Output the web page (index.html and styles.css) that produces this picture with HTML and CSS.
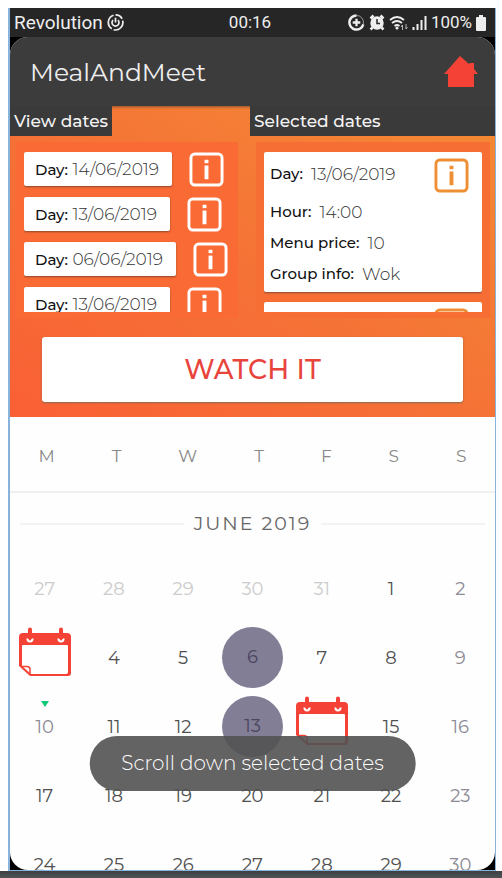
FILE: index.html
```html
<!DOCTYPE html>
<html lang="en">
<head>
<meta charset="utf-8">
<title>MealAndMeet</title>
<link rel="stylesheet" href="styles.css">
</head>
<body>
<svg class="defs" aria-hidden="true">
  <symbol id="info" viewBox="0 0 36 36">
    <rect x="2" y="2" width="32" height="32" rx="4" fill="none" stroke="currentColor" stroke-width="3"/>
    <path d="M18 14v14" fill="none" stroke="currentColor" stroke-width="4"/>
    <rect x="16" y="8" width="4" height="3.5" fill="currentColor"/>
  </symbol>
  <symbol id="event" viewBox="0 0 52 50">
    <path d="M4 6h44q4 0 4 4v36q0 3-3 3H11L0 39V10q0-4 4-4z" fill="#f44336"/>
    <path d="M3 19Q3 18 4 18h44q1 0 1 1v26q0 2-2 2H12L3 39z" fill="#fff"/>
    <path d="M2 39.500h6q3 0 3 3V47" fill="none" stroke="#f44336" stroke-width="1.500"/>
    <path d="M8.500 11.500q0 3 2.500 3t2.500-3M39.500 11.500q0 3 2.500 3t2.500-3" fill="none" stroke="#fff" stroke-width="2.200"/>
    <path d="M11 2.500v8M42 2.500v8" stroke="#f44336" stroke-width="4" stroke-linecap="round"/>
  </symbol>
</svg>
<div class="phone">
  <div class="status">
    <span class="carrier">Revolution
      <svg width="17" height="17" viewBox="0 0 18 18" fill="none" stroke="currentColor" stroke-width="1.8"><path d="M7 1.300A8 8 0 0 0 5 15.600M7 16.700A8 8 0 0 0 16.600 7M16 5A8 8 0 0 0 9 1"/><path d="M6.400 6.400a3.700 3.700 0 1 0 5.200 0M9 4v5"/></svg>
    </span>
    <span class="clock">00:16</span>
    <span class="indicators">
      <svg width="17" height="17" viewBox="0 0 18 18" fill="none" stroke="currentColor"><path d="M9 1.500A7.500 7.500 0 1 0 16.200 11" stroke-width="2.600"/><path d="M9 1.500A7.500 7.500 0 0 1 16.200 11" stroke-width="1" opacity=".6"/><path d="M9 5v8M5 9h8" stroke-width="2.400"/></svg>
      <svg width="16" height="17" viewBox="0 0 16 17"><path d="M4.500 1.500L1.500 4.500M11.500 1.500l3 3M3.500 13.500l-2 2M12.500 13.500l2 2" stroke="currentColor" stroke-width="2.500"/><circle cx="8" cy="9" r="6.700" fill="currentColor"/><path d="M8 5v4.500h3" fill="none" stroke="#262626" stroke-width="1.500"/></svg>
      <svg width="19" height="16" viewBox="0 0 19 16" fill="none" stroke="currentColor" stroke-width="1.700"><path d="M1 5Q8 -1 15 5M3 8q5-4 10 0M5.500 11q2.500-2 5 0"/><circle cx="8" cy="13" r=".7"/><path d="M13.500 15V10l-1.500 2M17 9v5l1.500-2" stroke-width="1" opacity=".7"/></svg>
      <svg width="15" height="15" viewBox="0 0 15 15" stroke="currentColor" stroke-width="2"><path d="M1.500 15v-3M5.500 15V9M9.500 15V5M13.500 15V1"/></svg>
      <span>100%</span>
      <svg width="10" height="16" viewBox="0 0 10 16" fill="currentColor"><path d="M3 0h4v2h2q1 0 1 1v12q0 1-1 1H1q-1 0-1-1V3q0-1 1-1h2z"/></svg>
    </span>
  </div>
  <main class="screen">
    <header class="appbar">
      <h1>MealAndMeet</h1>
      <button class="icon-button" aria-label="Home">
        <svg width="34" height="31" viewBox="0 0 34 31"><path d="M16 0l9 8 1-1h4v6l4 5h-4v13H4V18H0z" fill="#f44336"/></svg>
      </button>
    </header>
    <section class="dates">
      <div class="columns">
        <section class="column">
          <h2>View dates</h2>
          <ul class="list">
            <li><span class="chip"><b>Day:</b> 14/06/2019</span><button class="icon-button" aria-label="Info"><svg class="info"><use href="#info"/></svg></button></li>
            <li><span class="chip"><b>Day:</b> 13/06/2019</span><button class="icon-button" aria-label="Info"><svg class="info"><use href="#info"/></svg></button></li>
            <li><span class="chip"><b>Day:</b> 06/06/2019</span><button class="icon-button" aria-label="Info"><svg class="info"><use href="#info"/></svg></button></li>
            <li><span class="chip"><b>Day:</b> 13/06/2019</span><button class="icon-button" aria-label="Info"><svg class="info"><use href="#info"/></svg></button></li>
          </ul>
        </section>
        <section class="column">
          <h2 class="wide">Selected dates</h2>
          <div class="list cards">
            <article class="card">
              <dl>
                <div class="day"><dt>Day:</dt><dd>13/06/2019</dd></div>
                <div><dt>Hour:</dt><dd>14:00</dd></div>
                <div><dt>Menu price:</dt><dd>10</dd></div>
                <div><dt>Group info:</dt><dd>Wok</dd></div>
              </dl>
              <button class="icon-button" aria-label="Info"><svg class="info"><use href="#info"/></svg></button>
            </article>
            <article class="card next">
              <button class="icon-button" aria-label="Info"><svg class="info"><use href="#info"/></svg></button>
            </article>
          </div>
        </section>
      </div>
      <button class="watch">WATCH IT</button>
    </section>
    <section class="calendar">
      <div class="weekdays"><span>M</span><span>T</span><span>W</span><span>T</span><span>F</span><span>S</span><span>S</span></div>
      <h2 class="month">JUNE 2019</h2>
      <div class="days">
        <button class="out">27</button><button class="out">28</button><button class="out">29</button><button class="out">30</button><button class="out">31</button><button>1</button><button class="sunday">2</button>
        <button aria-label="3"><svg class="event"><use href="#event"/></svg></button><button>4</button><button>5</button><button><span class="picked">6</span></button><button>7</button><button>8</button><button class="sunday">9</button>
        <button class="sunday today">10</button><button>11</button><button>12</button><button><span class="picked">13</span></button><button aria-label="14"><svg class="event"><use href="#event"/></svg></button><button>15</button><button class="sunday">16</button>
        <button>17</button><button>18</button><button>19</button><button>20</button><button>21</button><button>22</button><button class="sunday">23</button>
        <button>24</button><button>25</button><button>26</button><button>27</button><button>28</button><button>29</button><button class="sunday">30</button>
      </div>
    </section>
  </main>
  <div class="toast" role="status">Scroll down selected dates</div>
</div>
<div class="edge"></div>
</body>
</html>
```

FILE: styles.css
```css
* { box-sizing: border-box; }
body {
  margin: 0;
  height: 100vh;
  padding-top: 8px;
  display: flex;
  flex-direction: column;
  background: #fff;
  color: #505050;
  font-family: Montserrat, Inter, sans-serif;
}
h1, h2, ul, dl, dd { margin: 0; padding: 0; font-weight: 400; }
button { font: inherit; color: inherit; border: 0; padding: 0; background: none; }
svg { display: block; }
.defs { position: absolute; width: 0; height: 0; }
.phone {
  position: relative;
  flex: 1;
  min-height: 0;
  margin: 0 6px 0 8px;
  display: flex;
  flex-direction: column;
  border: solid #88b4dc;
  border-width: 0 1px 1px 2px;
  background: #000;
}
.edge { height: 7px; background: linear-gradient(#3c3f43, #505356); }
.status {
  height: 29px;
  flex: none;
  display: grid;
  grid-template-columns: 1fr auto 1fr;
  align-items: center;
  padding: 0 9px 0 4px;
  background: #262626;
  color: #eee;
  font: 17px/29px Roboto, sans-serif;
}
.carrier, .indicators { display: flex; align-items: center; gap: 4px; }
.carrier { font-size: 19px; }
.indicators { justify-content: flex-end; }
.screen {
  flex: 1;
  min-height: 0;
  overflow: hidden;
  border-radius: 18px;
  background: #fefefe;
}
.appbar {
  height: 69px;
  display: flex;
  align-items: center;
  justify-content: space-between;
  padding: 0 17px 0 20px;
  background: #3c3c3c;
  color: #eee;
}
.appbar h1 { font-size: 25px; }
.dates {
  padding-bottom: 15px;
  background: linear-gradient(to top right, #fa6035, #f57136 45%, #f48a34);
  box-shadow: inset 0 3px 3px -2px #8a5030;
}
.columns { display: grid; grid-template-columns: 240px 1fr; }
.column { min-width: 0; }
.column h2 {
  width: fit-content;
  height: 30px;
  padding: 0 4px;
  background: #3a3a3a;
  color: #f4f4f4;
  font-size: 17px;
  font-weight: 500;
  line-height: 30px;
}
.column h2.wide { width: auto; }
.list {
  height: 176px;
  margin: 6px 12px 0 6px;
  border: solid transparent;
  border-width: 10px 8px 6px;
  overflow: hidden;
  background: #fa6a34;
  list-style: none;
}
.list li { display: flex; gap: 17px; margin-bottom: 10px; color: #fff; }
.chip {
  height: 34px;
  padding: 0 13px 0 11px;
  border-radius: 2px;
  background: #fff;
  box-shadow: 0 1px 2px #8a4a30;
  color: #333;
  font-size: 17px;
  font-weight: 300;
  line-height: 34px;
  white-space: nowrap;
}
.chip b { color: #111; font-size: 15px; font-weight: 500; }
.info { width: 35px; height: 35px; }
.cards { margin: 6px 5px 0 6px; background: #f76e35; }
.card {
  display: flex;
  justify-content: space-between;
  align-items: flex-start;
  margin-bottom: 10px;
  padding: 6px 13px 3px 6px;
  border-radius: 2px;
  background: #fff;
  box-shadow: 0 1px 2px #8a4a30;
  color: #ef8f35;
}
.card dl div { display: flex; align-items: center; gap: 8px; height: 31px; white-space: nowrap; }
.card dl .day { margin-bottom: 7px; }
.card dt { color: #111; font-size: 15px; font-weight: 500; }
.card dd { color: #333; font-size: 17px; font-weight: 300; }
.card.next { justify-content: flex-end; min-height: 140px; }
.watch {
  display: block;
  width: calc(100% - 64px);
  height: 65px;
  margin: 19px 32px 0;
  border-radius: 3px;
  background: #fff;
  box-shadow: 0 1px 2px #8a6a50;
  color: #e8443c;
  font-size: 27px;
  font-weight: 500;
}
.weekdays {
  height: 76px;
  display: flex;
  justify-content: space-around;
  align-items: center;
  padding-top: 4px;
  border-bottom: 2px solid #f0f0f0;
  color: #888;
  font-size: 17px;
}
.month {
  height: 61px;
  display: flex;
  align-items: center;
  gap: 10px;
  padding: 0 10px;
  color: #666;
  font-size: 19px;
  letter-spacing: 2px;
}
.month::before, .month::after { content: ""; flex: 1; height: 2px; background: #f3f3f3; }
.days { display: grid; grid-template-columns: repeat(7, 1fr); grid-auto-rows: 69px; }
.days button {
  position: relative;
  display: flex;
  align-items: center;
  justify-content: center;
  font-size: 18px;
}
.days .out { color: #ccc; }
.days .sunday { color: #8c8a94; }
.picked {
  width: 61px;
  height: 61px;
  border-radius: 50%;
  background: #827e96;
  color: #4a4560;
  line-height: 61px;
}
.event { width: 52px; height: 50px; margin-bottom: 12px; }
.today::before {
  content: "";
  position: absolute;
  top: 9px;
  border: solid transparent;
  border-width: 6px 4px 0;
  border-top-color: #10c878;
}
.toast {
  position: absolute;
  bottom: 79px;
  left: 50%;
  transform: translateX(-50%);
  height: 55px;
  padding: 0 32px;
  border-radius: 28px;
  background: rgba(82, 82, 82, .9);
  color: #fff;
  font-size: 20px;
  font-weight: 300;
  line-height: 55px;
  white-space: nowrap;
}
```
